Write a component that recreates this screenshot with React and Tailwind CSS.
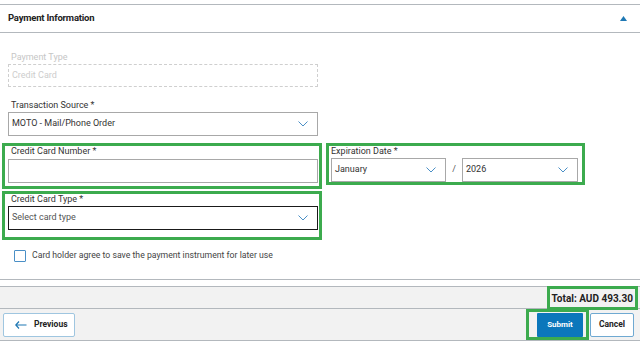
import React from 'react';

const Chevron = () => (
    <svg width="10" height="6" viewBox="0 0 10 6" className="shrink-0">
        <polyline points="0.5,0.5 5,5 9.5,0.5" fill="none" stroke="#4a8fc6" strokeWidth="1" />
    </svg>
);

const Select = ({ value, muted, dark, className = '' }) => (
    <div
        className={`flex items-center justify-between h-[24px] pl-[3px] pr-[9px] bg-white border ${dark ? 'border-[#1a1a1a]' : 'border-[#a8a8a8]'} ${className}`}
    >
        <span className={`text-[9px] ${muted ? 'text-[#555]' : 'text-[#333]'}`}>{value}</span>
        <Chevron />
    </div>
);

const Label = ({ children, light, inset = true }) => (
    <div className={`text-[9px] leading-[11px] ${inset ? 'pl-[3px]' : ''} ${light ? 'text-[#c6c6c6]' : 'text-[#333]'}`}>{children}</div>
);

const App = () => {
    return (
        <div className="w-[640px] h-[360px] bg-white overflow-hidden font-['Roboto',sans-serif] text-[#333]">
            <div className="mt-[4px] border-t border-[#b3b8bd]">
                <div className="h-[28px] flex items-center justify-between pl-2 pr-[13px] border-b border-[#b3b8bd]">
                    <span className="text-[9.5px] font-bold text-[#222] tracking-[-0.2px]">Payment Information</span>
                    <svg width="7" height="5" viewBox="0 0 7 5">
                        <polygon points="0,5 3.5,0 7,5" fill="#1f78b4" />
                    </svg>
                </div>

                <div className="px-2 pt-[19px] pb-[17px] border-b border-[#b3b8bd]">
                    <div className="w-[310px]">
                        <Label light>Payment Type</Label>
                        <div className="mt-[1px] h-[23px] flex items-center pl-[3px] border border-dashed border-[#cfcfcf]">
                            <span className="text-[9px] text-[#cdcdcd]">Credit Card</span>
                        </div>
                    </div>

                    <div className="w-[310px] mt-[13px]">
                        <Label>Transaction Source *</Label>
                        <Select value="MOTO - Mail/Phone Order" className="mt-[1px]" />
                    </div>

                    <div className="flex items-start mt-[7px]">
                        <div className="w-[320px] -ml-[6px] border-[3px] border-[#3cab4e] pl-[3px] pr-[1px] pb-[3px]">
                            <Label>Credit Card Number *</Label>
                            <div className="mt-[2px] h-[24px] bg-white border border-[#a8a8a8]" />
                        </div>
                        <div className="w-[259px] ml-[4px] border-[3px] border-[#3cab4e] pl-[2px] pr-[4px]">
                            <Label inset={false}>Expiration Date *</Label>
                            <div className="flex items-center mt-[1px]">
                                <Select value="January" className="w-[115px]" />
                                <span className="w-[16px] text-center text-[9px] text-[#555]">/</span>
                                <Select value="2026" className="flex-1" />
                            </div>
                        </div>
                    </div>

                    <div className="w-[320px] -ml-[6px] mt-[2px] border-[3px] border-[#3cab4e] pl-[3px] pr-[1px] pb-[7px]">
                        <Label>Credit Card Type *</Label>
                        <Select value="Select card type" muted dark className="mt-[1px]" />
                    </div>

                    <div className="flex items-center mt-[9px] pl-[6px]">
                        <div className="w-[12px] h-[12px] border border-[#4a8fc6] rounded-[1px] bg-white" />
                        <span className="ml-[6px] text-[8.7px] text-[#444]">Card holder agree to save the payment instrument for later use</span>
                    </div>
                </div>
            </div>

            <div className="mt-[6px] bg-[#f2f2f2] border-t border-[#b3b8bd]">
                <div className="h-[22px] flex justify-end border-b border-[#b3b8bd]">
                    <div className="h-[24px] -mt-[1px] mr-[2px] flex items-center border-[3px] border-[#3cab4e] px-[2px]">
                        <span className="text-[10px] font-bold text-[#222]">Total: AUD 493.30</span>
                    </div>
                </div>
                <div className="h-[32px] flex items-center justify-between border-b border-[#b3b8bd]">
                    <button className="ml-[3px] w-[72px] h-[24px] flex items-center pl-[11px] bg-white border border-[#9fc6e0] rounded-[2px]">
                        <svg width="12" height="8" viewBox="0 0 12 8">
                            <path d="M4 0.5 L0.8 4 L4 7.5 M0.8 4 H11.5" fill="none" stroke="#1f78b4" strokeWidth="1.2" />
                        </svg>
                        <span className="ml-[7px] text-[8.5px] font-bold text-[#222]">Previous</span>
                    </button>
                    <div className="flex items-center h-full mr-[6px]">
                        <div className="h-full flex items-center border-[3px] border-[#3cab4e] pl-[8px] pr-[3px]">
                            <button className="w-[46px] h-[24px] bg-[#0b77bb] rounded-[1px] text-white text-[8px] font-bold">
                                Submit
                            </button>
                        </div>
                        <button className="ml-[1px] w-[44px] h-[24px] bg-white border border-[#6fa9d2] rounded-[2px] text-[8.5px] font-bold text-[#222]">
                            Cancel
                        </button>
                    </div>
                </div>
            </div>
        </div>
    );
};

export default App;
